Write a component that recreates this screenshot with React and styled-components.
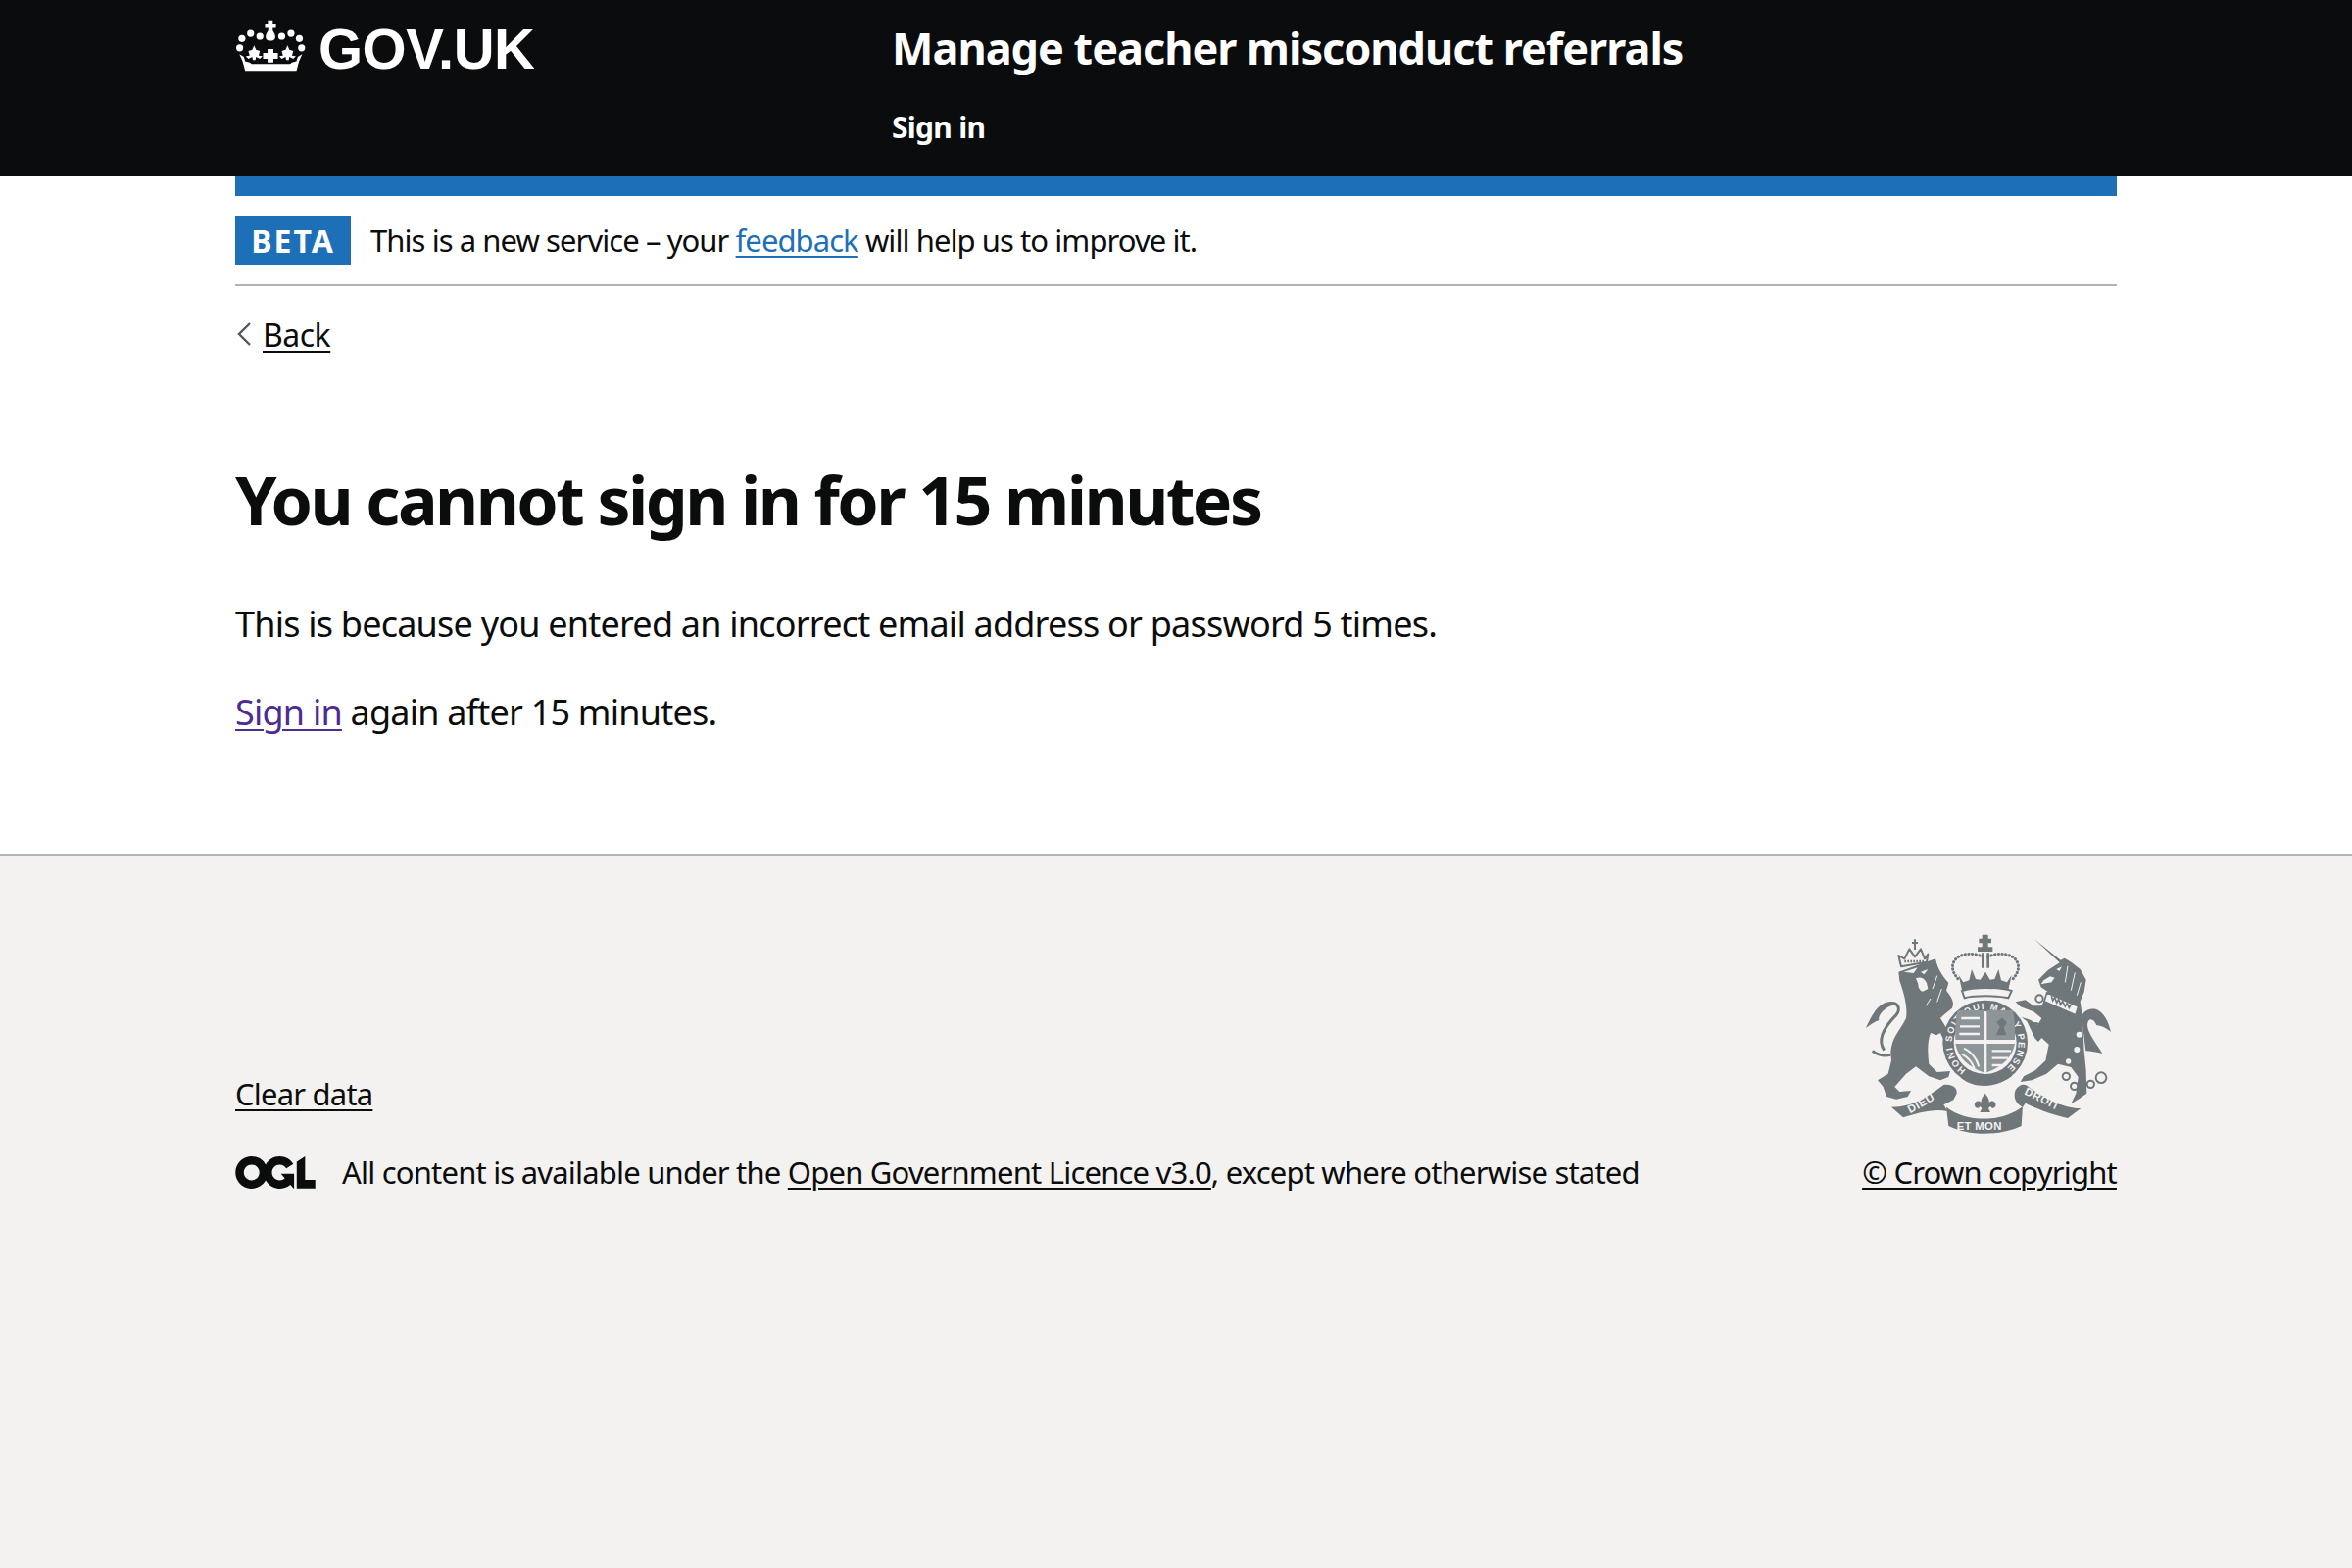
import React from "react";
import styled, { createGlobalStyle } from "styled-components";

const Global = createGlobalStyle`
  html, body { margin: 0; padding: 0; background: #fff; }
  body { font-family: "Noto Sans", "Liberation Sans", sans-serif; color: #0b0c0c; }
`;

const Page = styled.div`
  display: flex;
  flex-direction: column;
  min-height: 1600px;
`;

const Container = styled.div`
  width: 1920px;
  margin: 0 auto;
`;

const Header = styled.header`
  background: #0b0c0e;
  color: #fff;
  height: 180px;
`;

const HeaderRow = styled.div`
  display: grid;
  grid-template-columns: 670px 1fr;
  padding-top: 20px;
`;

const Logo = styled.div`
  display: flex;
  align-items: flex-start;
  gap: 11px;
  height: 60px;
`;

const LogoText = styled.span`
  font-family: "Liberation Sans", sans-serif;
  font-weight: 700;
  font-size: 58px;
  line-height: 60px;
  letter-spacing: -0.5px;
`;

const ServiceName = styled.div`
  font-weight: 700;
  font-size: 45px;
  line-height: 58px;
  letter-spacing: -1px;
`;

const NavItem = styled.div`
  font-weight: 700;
  font-size: 30px;
  line-height: 40px;
  margin-top: 32px;
  letter-spacing: -0.7px;
`;

const Banner = styled.div`
  height: 20px;
  background: #1d70b8;
`;

const Beta = styled.div`
  display: flex;
  align-items: center;
  gap: 20px;
  padding: 20px 0;
  border-bottom: 2px solid #b1b4b6;
`;

const Tag = styled.strong`
  display: flex;
  align-items: center;
  justify-content: center;
  width: 118px;
  height: 50px;
  background: #1d70b8;
  color: #fff;
  font-size: 32px;
  letter-spacing: 2px;
`;

const BetaText = styled.span`
  font-size: 31px;
  line-height: 40px;
  letter-spacing: -0.93px;
`;

const TextLink = styled.a`
  color: ${p => p.$color || "#0b0c0c"};
  text-decoration: underline;
  text-decoration-thickness: 2px;
  text-underline-offset: 4px;
`;

const BackRow = styled.div`
  display: flex;
  align-items: center;
  gap: 12px;
  margin-top: 29px;
  padding-left: 2px;
  height: 40px;
  font-size: 32px;
  letter-spacing: -0.5px;
`;

const Main = styled.main`
  padding: 104px 0 119px;
`;

const Heading = styled.h1`
  margin: 0 0 57px;
  font-size: 68px;
  line-height: 90px;
  font-weight: 700;
  letter-spacing: -2.55px;
`;

const Para = styled.p`
  margin: 0 0 40px;
  font-size: 36px;
  line-height: 50px;
  letter-spacing: -0.78px;
  &:last-child { margin-bottom: 0; }
`;

const Footer = styled.footer`
  flex: 1;
  background: #f3f2f1;
  border-top: 2px solid #b1b4b6;
`;

const FooterRow = styled.div`
  display: flex;
  justify-content: space-between;
  align-items: flex-end;
  padding-top: 76px;
`;

const FooterLeft = styled.div`
  display: flex;
  flex-direction: column;
  gap: 40px;
`;

const FooterText = styled.span`
  font-size: 31px;
  line-height: 40px;
  letter-spacing: -0.8px;
`;

const Licence = styled.div`
  display: flex;
  align-items: center;
  gap: 27px;
`;

const CopyrightBlock = styled.div`
  display: flex;
  flex-direction: column;
  align-items: flex-end;
  gap: 17px;
`;

const Crown = () => (
  <svg width="74" height="54" viewBox="60 60 220 165" fill="#fff" aria-hidden="true">
    <path d="M159 62h15v10h10v14h-10v8c4 6 8 12 8 20 0 8-7 12-15 12s-15-4-15-12c0-8 4-14 8-20v-8h-10V72h9z" />
    <circle cx="134" cy="112" r="11" /><circle cx="105" cy="103" r="11" /><circle cx="78" cy="119" r="11" /><circle cx="71" cy="148" r="11" />
    <circle cx="202" cy="112" r="11" /><circle cx="231" cy="103" r="11" /><circle cx="257" cy="119" r="11" /><circle cx="264" cy="148" r="11" />
    <path d="M116 140l6 14 12 4-4 14 12 2-8 8-12-6-2 10h-8l-2-10-12 6-8-8 12-2-4-14 12-4z" />
    <path d="M220 140l6 14 12 4-4 14 12 2-8 8-12-6-2 10h-8l-2-10-12 6-8-8 12-2-4-14 12-4z" />
    <path d="M158 152h18v12h14v18h-14v12h-18v-12h-14v-18h14z" />
    <path d="M70 168l14 8 4 14 14 4 6 4h120l6-4 14-4 4-14 14-8-10 22-8 30H88l-8-30z" />
  </svg>
);

const Ogl = () => (
  <svg width="82" height="33" viewBox="0 0 483.2 195.7" aria-hidden="true">
    <path fill="#0b0c0c" d="M421.5 142.8V.1l-50.7 32.3v161.1h112.4v-50.7zm-122.3-9.6A47.12 47.12 0 0 1 221 97.8c0-26 21.1-47.1 47.1-47.1 16.7 0 31.4 8.7 39.7 21.8l42.7-27.2A97.63 97.63 0 0 0 268.1 0c-36.5 0-68.3 20.1-85.1 49.7A98 98 0 0 0 97.8 0C43.9 0 0 43.9 0 97.8s43.9 97.8 97.8 97.8c36.5 0 68.3-20.1 85.1-49.7a97.76 97.76 0 0 0 149.6 25.4l19.4 22.2h3v-87.8h-80l24.3 27.5zM97.8 145c-26 0-47.1-21.1-47.1-47.1s21.1-47.1 47.1-47.1 47.2 21 47.2 47S123.8 145 97.8 145" />
  </svg>
);

const MOTTO_FONT = "'Liberation Sans', sans-serif";

// coordinates follow a 3x crop of the crest, hence the offset viewBox
const Crest = () => (
  <svg width="260" height="210" viewBox="60 30 780 630" fill="#6f777b" aria-hidden="true">
    {/* lion */}
    <path d="M172 158L285 118C290 140 300 165 325 192L318 215C335 235 345 255 335 270L310 290L300 300L340 365L345 395L325 398L300 345L288 352L270 345C258 375 262 415 265 440L290 465L330 462L325 480L300 490L265 478L225 448L195 470L160 510L175 525L210 522L200 540L165 548L135 540L125 510L108 490L140 470L150 430L148 405C150 360 175 340 195 300C200 270 190 225 175 185Z" />
    <path d="M148 412C125 418 108 412 92 400M128 398C105 365 130 325 165 290C180 270 170 250 145 254" fill="none" stroke="#6f777b" strokeWidth="9" />
    <path d="M150 250C115 248 95 280 72 330C88 318 100 310 112 306C108 296 124 270 150 262Z" />
    <path d="M225 178C238 172 250 176 258 192L262 210L246 218C236 216 232 205 232 195Z" fill="#f3f2f1" />
    <path d="M188 158L230 145L218 162ZM262 150L240 158L250 166Z" fill="#f3f2f1" />
    <path d="M290 170L276 210M304 210L290 250M270 240L256 262" fill="none" stroke="#f3f2f1" strokeWidth="3" />
    <path d="M180 142L172 108L190 118L205 88L222 112L240 88L252 118L262 104L258 128Z" fill="none" stroke="#6f777b" strokeWidth="6" strokeLinejoin="round" />
    <path d="M213 66h6v-8h6v8h6v6h-6v18h-6V72h-6z" />
    <path d="M190 126h60" stroke="#6f777b" strokeWidth="7" strokeDasharray="5 4" />
    {/* crown */}
    <path d="M428 44h18v12h10v14h-10v12h14v14h-46V82h14V70h-10V56h10z" />
    <path d="M426 100h8v46h-8zM442 100h8v46h-8z" />
    <g fill="none" stroke="#6f777b" strokeWidth="9" strokeDasharray="1 10" strokeLinecap="round">
      <path d="M430 112c-30-16-84-12-92 24-4 18 8 36 22 50" />
      <path d="M446 112c30-16 84-12 92 24 4 18-8 36-22 50" />
    </g>
    <path d="M356 168l14 22 18-6 8-34 12 30 14 2 16-24 14 24 14-2 12-30 8 34 18 6 14-22-10 46H366z" />
    <path d="M366 216C400 204 480 204 518 216L508 238C480 230 400 230 374 238Z" fill="#f3f2f1" stroke="#6f777b" strokeWidth="6" />
    {/* unicorn */}
    <path d="M588 58L668 122L680 116L700 128L728 150L746 182L740 220L728 248L735 300L740 400L746 460L748 530L722 548L700 562L715 530L722 480L700 450L660 440L625 470L580 490L545 495L555 478L590 460L622 430L632 380L610 360L600 372L590 362L565 310L548 296L575 305L598 320L610 300L585 280L545 265L530 250L560 244L585 262L610 262L620 240L628 218L608 205L600 182L630 152L665 130Z" />
    <path d="M608 196L640 190L650 176L636 172L616 184ZM655 150L672 142L664 156Z" fill="#f3f2f1" />
    <path d="M690 140L682 190M712 160L700 215M730 190L718 230" fill="none" stroke="#f3f2f1" strokeWidth="3" />
    <path d="M626 222L722 264L714 290L618 248Z" fill="#f3f2f1" stroke="#6f777b" strokeWidth="5" />
    <path d="M640 232l4 14 6-10 6 16 6-10 6 16 6-10 8 16 6-10 6 14 6-10" fill="none" stroke="#6f777b" strokeWidth="5" />
    <path d="M735 320C722 290 745 268 775 272C800 280 815 310 822 342C805 328 790 322 778 322C770 300 752 296 750 320C750 345 780 380 796 408C780 405 760 400 745 400Z" />
    <g fill="none" stroke="#6f777b" strokeWidth="6">
      <circle cx="685" cy="478" r="11" /><circle cx="710" cy="508" r="11" /><circle cx="760" cy="502" r="11" /><circle cx="792" cy="482" r="16" />
      <circle cx="603" cy="240" r="11" /><circle cx="592" cy="326" r="11" />
    </g>
    <g fill="#f3f2f1">
      <circle cx="718" cy="396" r="9" /><circle cx="692" cy="432" r="8" /><circle cx="725" cy="350" r="9" />
    </g>
    {/* garter and shield */}
    <circle cx="437" cy="375" r="130" />
    <circle cx="437" cy="375" r="96" fill="#f3f2f1" />
    <path id="garterArc" d="M378.5 458.5A102 102 0 1 1 495.5 458.5" fill="none" />
    <text fontFamily={MOTTO_FONT} fontSize="28" fontWeight="700" fill="#f3f2f1">
      <textPath href="#garterArc" textLength="505">HONI SOIT QUI MAL Y PENSE</textPath>
    </text>
    <path d="M352 276h80v90h-86c-1-30 0-60 6-90zM442 276h80c6 30 7 60 6 90h-86zM346 378h86v88c-44-16-78-44-86-88zM442 378h86c-8 44-42 72-86 88z" fill="#8e9599" />
    <path d="M364 300h56M360 325h60M358 348h62M458 400h58M458 422h50M458 444h30" stroke="#f3f2f1" strokeWidth="7" />
    <path d="M372 392c22 10 38 30 46 56M366 410c18 10 32 26 38 44" stroke="#f3f2f1" strokeWidth="6" fill="none" />
    <path d="M490 298l-18 14 10 14-12 26h32l-8-24 10-14z" fill="#6f777b" />
    <path d="M364 484c44 34 106 30 156-8l-14-16-66 32-62-26z" />
    {/* motto */}
    <path d="M150 572C220 572 260 540 310 504C335 500 352 512 350 530L340 550L310 565L322 585C280 575 230 590 186 604Z" />
    <path d="M318 572C380 620 490 620 552 570L548 630C480 662 385 660 325 630Z" />
    <path d="M530 520C540 505 552 500 565 506C610 540 670 575 730 576L690 606C640 595 590 575 560 560L552 572C530 562 522 540 530 520Z" />
    <text x="208" y="592" fontFamily={MOTTO_FONT} fontSize="34" fontWeight="700" fill="#f3f2f1" transform="rotate(-30 208 592)" letterSpacing="2">DIEU</text>
    <text x="350" y="642" fontFamily={MOTTO_FONT} fontSize="34" fontWeight="700" fill="#f3f2f1" letterSpacing="1">ET MON</text>
    <text x="555" y="532" fontFamily={MOTTO_FONT} fontSize="34" fontWeight="700" fill="#f3f2f1" transform="rotate(26 555 532)" letterSpacing="2">DROIT</text>
    <path d="M437 530c8 12 14 18 12 28 14-12 26 4 18 14-6 6-12 2-14-2l-6 6 6 12h-32l6-12-6-6c-2 4-8 8-14 2-8-10 4-26 18-14-2-10 4-16 12-28z" />
  </svg>
);

const BackChevron = () => (
  <svg width="14" height="24" viewBox="0 0 14 24" fill="none" stroke="#505a5f" strokeWidth="2.4" aria-hidden="true">
    <path d="M13 1 2 12l11 11" />
  </svg>
);

export default function App() {
  return (
    <Page>
      <Global />
      <Header>
        <Container>
          <HeaderRow>
            <Logo>
              <Crown />
              <LogoText>GOV.UK</LogoText>
            </Logo>
            <div>
              <ServiceName>Manage teacher misconduct referrals</ServiceName>
              <NavItem>Sign in</NavItem>
            </div>
          </HeaderRow>
        </Container>
      </Header>
      <Container>
        <Banner />
        <Beta>
          <Tag>BETA</Tag>
          <BetaText>
            This is a new service – your <TextLink href="#" $color="#1d70b8">feedback</TextLink> will help us to improve it.
          </BetaText>
        </Beta>
        <BackRow>
          <BackChevron />
          <TextLink href="#">Back</TextLink>
        </BackRow>
        <Main>
          <Heading>You cannot sign in for 15 minutes</Heading>
          <Para>This is because you entered an incorrect email address or password 5 times.</Para>
          <Para><TextLink href="#" $color="#4c2c92">Sign in</TextLink> again after 15 minutes.</Para>
        </Main>
      </Container>
      <Footer>
        <Container>
          <FooterRow>
            <FooterLeft>
              <FooterText><TextLink href="#">Clear data</TextLink></FooterText>
              <Licence>
                <Ogl />
                <FooterText>
                  All content is available under the <TextLink href="#">Open Government Licence v3.0</TextLink>, except where otherwise stated
                </FooterText>
              </Licence>
            </FooterLeft>
            <CopyrightBlock>
              <Crest />
              <FooterText><TextLink href="#">© Crown copyright</TextLink></FooterText>
            </CopyrightBlock>
          </FooterRow>
        </Container>
      </Footer>
    </Page>
  );
}
